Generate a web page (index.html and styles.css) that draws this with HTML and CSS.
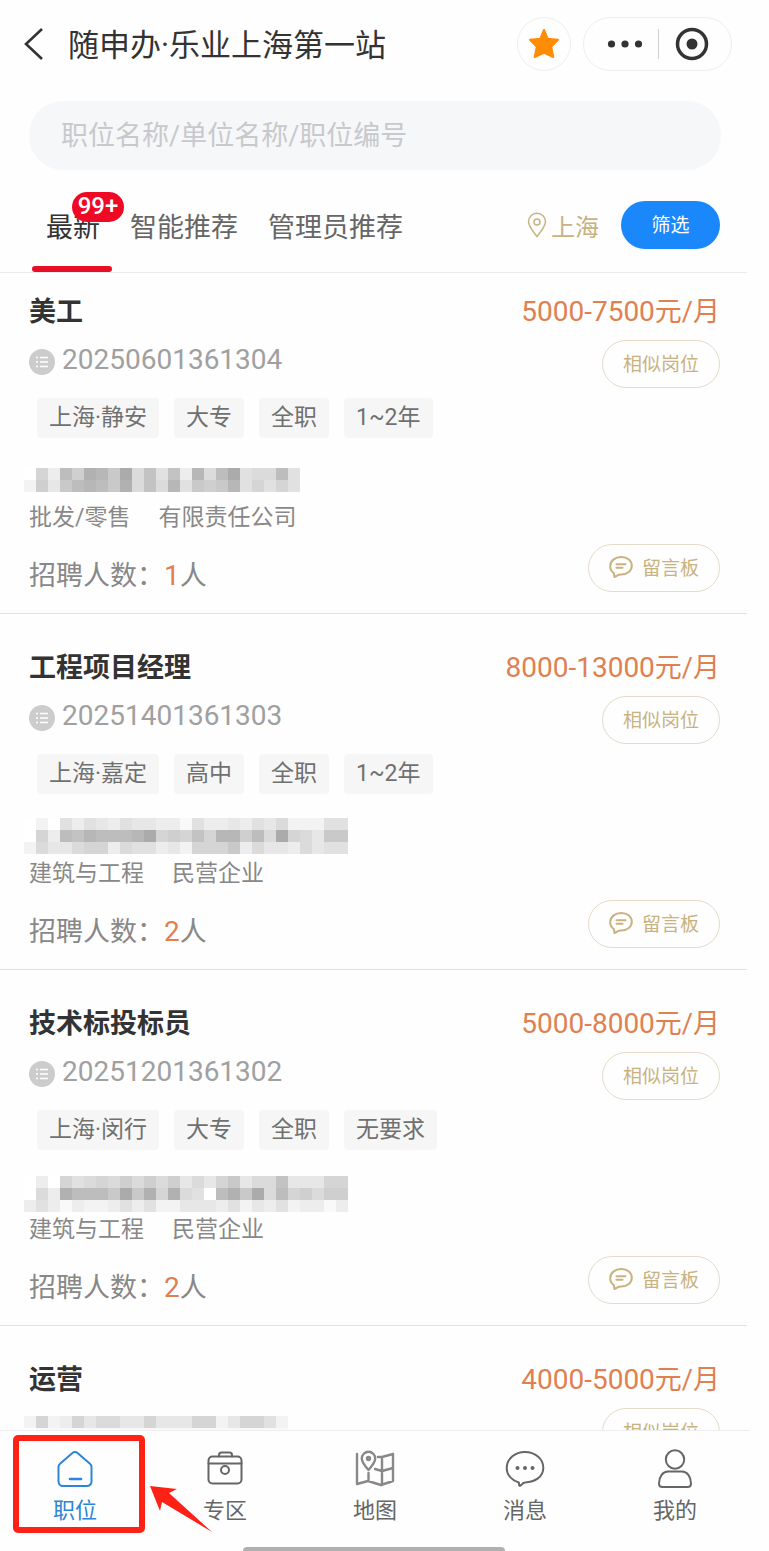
FILE: index.html
```html
<!DOCTYPE html>
<html lang="zh-CN">
<head>
    <meta charset="UTF-8">
    <meta name="viewport" content="width=device-width, initial-scale=1.0">
    <title>随申办·乐业上海第一站</title>
    <link rel="stylesheet" href="styles.css">
</head>
<body>
    <!-- 公用图标 -->
    <svg class="sprite" aria-hidden="true">
        <symbol id="icon-list" viewBox="0 0 26 26">
            <circle cx="13" cy="13" r="13" fill="#cccccc"/>
            <path d="M7 8.500h2M11 8.500h8M7 13h2M11 13h8M7 17.500h2M11 17.500h8" stroke="#ffffff" stroke-width="1.600" fill="none"/>
        </symbol>
        <symbol id="icon-board" viewBox="0 0 24 24">
            <path d="M4.800 18C2.300 16.300 1.200 14 1.200 11.300 1.200 5.900 6 2 12.300 2S22.800 5.900 22.800 10.800 18.500 19.500 12 19.500c-1.500 0-2.400.2-3.400.9L5.500 22z" fill="none" stroke="currentColor" stroke-width="2" stroke-linejoin="round"/>
            <path d="M7.500 9.200h9M7.500 12.800h6" stroke="currentColor" stroke-width="2" stroke-linecap="round"/>
        </symbol>
    </svg>

    <div class="app">
        <header class="navbar">
            <button type="button" class="back-btn" aria-label="返回">
                <svg width="22" height="34" viewBox="0 0 22 34" fill="none" stroke="#333333" stroke-width="2.600"><path d="M20 2L4 17l16 15"/></svg>
            </button>
            <h1 class="nav-title">随申办·乐业上海第一站</h1>
            <button type="button" class="star-btn" aria-label="收藏">
                <svg width="32" height="32" viewBox="0 0 32 32"><path d="M16 2l3.800 8.800 10.200 1-6.800 7 2.100 10.200L16 24.800 6.700 29l2.100-10.200-6.800-7 10.200-1z" fill="#ff8c05" stroke="#ff8c05" stroke-width="2" stroke-linejoin="round"/></svg>
            </button>
            <div class="capsule">
                <button type="button" aria-label="更多">
                    <svg width="36" height="8" viewBox="0 0 36 8" fill="#333333"><circle cx="4.500" cy="4" r="3.600"/><circle cx="18" cy="4" r="3.600"/><circle cx="31.500" cy="4" r="3.600"/></svg>
                </button>
                <button type="button" aria-label="关闭">
                    <svg width="34" height="34" viewBox="0 0 34 34"><circle cx="17" cy="17" r="14.500" fill="none" stroke="#333333" stroke-width="3.500"/><circle cx="17" cy="17" r="5.500" fill="#333333"/></svg>
                </button>
            </div>
        </header>

        <input type="search" class="search" placeholder="职位名称/单位名称/职位编号" aria-label="搜索职位">

        <div class="filter-bar">
            <nav class="tabs">
                <a href="#new" class="tab active">最新<span class="badge">99+</span></a>
                <a href="#smart" class="tab">智能推荐</a>
                <a href="#admin" class="tab">管理员推荐</a>
            </nav>
            <button type="button" class="location">
                <svg width="20" height="26" viewBox="0 0 20 26" fill="none" stroke="currentColor" stroke-width="1.500"><path d="M10 24.500C5 18.500 1.500 14 1.500 9.800a8.500 8.500 0 0 1 17 0c0 4.200-3.500 8.700-8.500 14.700z"/><circle cx="10" cy="10" r="3"/></svg>
                上海
            </button>
            <button type="button" class="filter-btn">筛选</button>
        </div>

        <main class="job-list">
            <article class="job">
                <div class="job-head">
                    <h2>美工</h2>
                    <span class="salary"><b>5000-7500</b>元/月</span>
                </div>
                <div class="job-row">
                    <span class="job-id"><svg class="list-icon"><use href="#icon-list"/></svg>20250601361304</span>
                    <button type="button" class="pill">相似岗位</button>
                </div>
                <ul class="tags"><li>上海·静安</li><li>大专</li><li>全职</li><li>1~2年</li></ul>
                <svg class="mosaic" data-top="8" data-rows="073b8dc9e6a5a3c6be566b5 2849bcb9d6a6c5989c57575"></svg>
                <p class="company-type"><span>批发/零售</span><span>有限责任公司</span></p>
                <div class="job-foot">
                    <p>招聘人数：<b>1</b>人</p>
                    <button type="button" class="pill"><svg class="board-icon"><use href="#icon-board"/></svg>留言板</button>
                </div>
            </article>

            <article class="job">
                <div class="job-head">
                    <h2>工程项目经理</h2>
                    <span class="salary"><b>8000-13000</b>元/月</span>
                </div>
                <div class="job-row">
                    <span class="job-id"><svg class="list-icon"><use href="#icon-list"/></svg>20251401361303</span>
                    <button type="button" class="pill">相似岗位</button>
                </div>
                <ul class="tags"><li>上海·嘉定</li><li>高中</li><li>全职</li><li>1~2年</li></ul>
                <svg class="mosaic" data-top="2" data-rows="020535435443315334354622255 073bacbbbce787a7cc8b6e76499 264467736553427779364436455"></svg>
                <p class="company-type"><span>建筑与工程</span><span>民营企业</span></p>
                <div class="job-foot">
                    <p>招聘人数：<b>2</b>人</p>
                    <button type="button" class="pill"><svg class="board-icon"><use href="#icon-board"/></svg>留言板</button>
                </div>
            </article>

            <article class="job">
                <div class="job-head">
                    <h2>技术标投标员</h2>
                    <span class="salary"><b>5000-8000</b>元/月</span>
                </div>
                <div class="job-row">
                    <span class="job-id"><svg class="list-icon"><use href="#icon-list"/></svg>20251201361302</span>
                    <button type="button" class="pill">相似岗位</button>
                </div>
                <ul class="tags"><li>上海·闵行</li><li>大专</li><li>全职</li><li>无要求</li></ul>
                <svg class="mosaic" data-top="4" data-rows="030756768686846479466a44477 063dbbb9e9d7d650bd9e6b78688 353132235352244435243523313"></svg>
                <p class="company-type"><span>建筑与工程</span><span>民营企业</span></p>
                <div class="job-foot">
                    <p>招聘人数：<b>2</b>人</p>
                    <button type="button" class="pill"><svg class="board-icon"><use href="#icon-board"/></svg>留言板</button>
                </div>
            </article>

            <article class="job">
                <div class="job-head">
                    <h2>运营</h2>
                    <span class="salary"><b>4000-5000</b>元/月</span>
                </div>
                <div class="job-row">
                    <svg class="mosaic" data-top="8" data-rows="2723746644744477247752 0111111111111111111111"></svg>
                    <button type="button" class="pill">相似岗位</button>
                </div>
            </article>
        </main>

        <nav class="tabbar">
            <a href="#jobs" class="active">
                <svg width="40" height="40" viewBox="0 0 40 40"><path d="M17.200 4.200L5.300 14.400C4 15.500 3.500 16.500 3.500 18v14.500a4.500 4.500 0 0 0 4.500 4.500h24a4.500 4.500 0 0 0 4.500-4.500V18c0-1.500-.5-2.500-1.800-3.600L22.800 4.200c-1.800-1.500-3.800-1.500-5.600 0z"/><path d="M15 30h11" stroke-width="2.600"/></svg>
                <span>职位</span>
            </a>
            <a href="#zone">
                <svg width="40" height="40" viewBox="0 0 40 40"><rect x="3.500" y="7.500" width="33" height="27" rx="4"/><path d="M3.500 14.500h33M14 7.500V6a2.500 2.500 0 0 1 2.500-2.500h8A2.500 2.500 0 0 1 27 6v1.500"/><circle cx="20" cy="21" r="4"/></svg>
                <span>专区</span>
            </a>
            <a href="#map">
                <svg class="map-icon" width="40" height="40" viewBox="0 0 40 40"><path d="M2 5v30l11-3 13 4 12-4V5l-11 3h-4M27 8v28M13.500 24v8M20 20l7 2 11-3"/><path d="M13.500 21C9.500 16.500 6.800 13 6.800 9.500a6.700 6.700 0 0 1 13.400 0c0 3.500-2.700 7-6.700 11.500z"/><circle cx="13.500" cy="9.500" r="1.500"/></svg>
                <span>地图</span>
            </a>
            <a href="#message">
                <svg width="40" height="40" viewBox="0 0 40 40"><path d="M13.800 33.500C6.500 31.300 1.700 25.800 1.700 19 1.700 9.900 9.900 3 20 3s18.300 6.900 18.300 15.700c0 9.300-8.300 14.300-18.300 14.700-1.500 0-2.200.8-3.200 2-1.200 1.500-2.700 2.100-2.600.6z"/><g class="dots"><circle cx="12.500" cy="19" r="2"/><circle cx="20" cy="19" r="2"/><circle cx="27.500" cy="19" r="2"/></g></svg>
                <span>消息</span>
            </a>
            <a href="#mine">
                <svg width="40" height="40" viewBox="0 0 40 40"><circle cx="20" cy="10.500" r="9.200"/><path d="M13 22.500h14c5 0 9 5 9 12 0 2.500-1.300 3.500-3.500 3.500h-25C5.300 38 4 37 4 34.500c0-7 4-12 9-12z"/></svg>
                <span>我的</span>
            </a>
            <!-- 操作指引标注 -->
            <div class="guide-box"></div>
            <svg class="guide-arrow" width="62" height="46" viewBox="0 0 62 46"><path d="M0 0l27 3-8 4 43 39-50-30-2 9z" fill="#fe2216"/></svg>
            <div class="home-indicator"></div>
        </nav>
    </div>

    <script>
        // 单位名称打码：每个十六进制字符对应一个灰度方块
        document.querySelectorAll('.mosaic').forEach((svg) => {
            const size = 12;
            const top = Number(svg.dataset.top);
            svg.dataset.rows.split(' ').forEach((row, y) => {
                [...row].forEach((level, x) => {
                    const gray = 255 - parseInt(level, 16) * 6;
                    const rect = document.createElementNS('http://www.w3.org/2000/svg', 'rect');
                    rect.setAttribute('x', x * size);
                    rect.setAttribute('y', top + y * size);
                    rect.setAttribute('width', size);
                    rect.setAttribute('height', size);
                    rect.setAttribute('fill', `rgb(${gray},${gray},${gray})`);
                    svg.appendChild(rect);
                });
            });
        });
    </script>
</body>
</html>
```
FILE: styles.css
```css
* {
    box-sizing: border-box;
}
body {
    margin: 0;
    padding-right: 22px;
    background: #fefefe;
    color: #333333;
    font-family: Roboto, "Noto Sans CJK SC", sans-serif;
}
h1, h2, p, ul {
    margin: 0;
    padding: 0;
}
button {
    padding: 0;
    border: none;
    background: none;
    color: inherit;
    font-family: inherit;
    cursor: pointer;
}
a {
    color: inherit;
    text-decoration: none;
}
svg {
    flex-shrink: 0;
}
.sprite {
    display: none;
}
.app {
    display: flex;
    flex-direction: column;
    height: 100vh;
}

/* 顶部导航 */
.navbar {
    display: flex;
    align-items: center;
    padding: 17px 15px 0 22px;
}
.back-btn {
    display: flex;
}
.nav-title {
    flex: 1;
    margin-left: 24px;
    padding-top: 4px;
    font-size: 31px;
    font-weight: 400;
    line-height: 50px;
    white-space: nowrap;
}
.star-btn {
    display: flex;
    align-items: center;
    justify-content: center;
    width: 54px;
    height: 54px;
    border: 1px solid #eeeeee;
    border-radius: 50%;
}
.capsule {
    display: flex;
    align-items: center;
    width: 149px;
    height: 54px;
    margin-left: 12px;
    padding-right: 6px;
    border: 1px solid #eeeeee;
    border-radius: 27px;
}
.capsule button {
    display: flex;
    flex: 1;
    align-items: center;
    justify-content: center;
    height: 30px;
}
.capsule button:first-child {
    padding-left: 8px;
    border-right: 1px solid #d0d0d0;
}

.search {
    height: 69px;
    margin: 30px 26px 0 29px;
    padding: 0 32px;
    border: none;
    border-radius: 34px;
    background: #f6f7f9;
    font-family: inherit;
    font-size: 27px;
    outline: none;
}
.search::placeholder {
    color: #c8c9cc;
}

/* 分类与筛选 */
.filter-bar {
    display: flex;
    align-items: center;
    padding: 0 27px 0 31px;
    border-bottom: 1px solid #ebebeb;
}
.tabs {
    display: flex;
    flex: 1;
}
.tab {
    position: relative;
    height: 102px;
    padding: 0 15px;
    color: #666666;
    font-size: 27px;
    line-height: 116px;
    white-space: nowrap;
}
.tab.active {
    color: #333333;
}
.tab.active::after {
    content: "";
    position: absolute;
    bottom: 0;
    left: 1px;
    width: 80px;
    height: 6px;
    border-radius: 3px;
    background: #e60f26;
}
.badge {
    position: absolute;
    top: 22px;
    left: 41px;
    width: 52px;
    height: 30px;
    border-radius: 15px;
    background: #ee0a24;
    color: #ffffff;
    font-size: 24px;
    font-weight: 500;
    line-height: 28px;
    text-align: center;
}
.location {
    display: flex;
    align-items: center;
    gap: 4px;
    margin-top: 8px;
    color: #c8b27f;
    font-size: 24px;
}
.filter-btn {
    width: 99px;
    height: 48px;
    margin: 8px 0 0 22px;
    padding-bottom: 3px;
    border-radius: 24px;
    background: #1a88fa;
    color: #ffffff;
    font-size: 19px;
}

/* 职位列表 */
.job-list {
    flex: 1;
    min-height: 0;
    overflow-y: auto;
    scrollbar-width: none;
}
.job {
    padding: 37px 27px 21px 29px;
    border-bottom: 1px solid #e2e2e2;
}
.job:first-child {
    padding-top: 22px;
}
.job-head {
    display: flex;
    justify-content: space-between;
    font-size: 27px;
    line-height: 34px;
}
.job-head h2 {
    font-size: 27px;
    font-weight: 700;
}
.salary {
    color: #e08050;
}
.salary b {
    font-size: 28px;
    font-weight: 400;
}
.job-row {
    display: flex;
    align-items: flex-start;
    justify-content: space-between;
    margin-top: 11px;
}
.job-id {
    display: flex;
    align-items: center;
    gap: 7px;
    color: #a0a0a0;
    font-size: 28px;
    line-height: 40px;
}
.list-icon {
    width: 26px;
    height: 26px;
    margin-top: 3px;
}
.pill {
    display: flex;
    align-items: center;
    height: 48px;
    padding: 0 20px 4px;
    border: 1px solid #e4dcc8;
    border-radius: 24px;
    color: #c8b27f;
    font-size: 19px;
    white-space: nowrap;
}
.board-icon {
    width: 24px;
    height: 24px;
    margin: 2px 9px 0 0;
}
.tags {
    display: flex;
    gap: 15px;
    margin: 10px 0 0 8px;
    list-style: none;
}
.tags li {
    padding: 0 12px;
    border-radius: 4px;
    background: #f6f6f6;
    color: #707070;
    font-size: 23px;
    line-height: 40px;
}
.mosaic {
    display: block;
    width: 324px;
    height: 41px;
    margin: 22px 0 0 -5px;
}
.job-row .mosaic {
    margin-top: 0;
}
.company-type {
    display: flex;
    gap: 28px;
    color: #888888;
    font-size: 23px;
    line-height: 34px;
}
.job-foot {
    display: flex;
    align-items: flex-end;
    justify-content: space-between;
    margin-top: 9px;
    color: #888888;
    font-size: 27px;
    line-height: 32px;
}
.job-foot b {
    color: #e08050;
    font-size: 28px;
    font-weight: 400;
}

/* 底部菜单 */
.tabbar {
    position: relative;
    display: flex;
    height: 121px;
    margin-right: -3px;
    border-top: 1px solid #eeeeee;
}
.tabbar a {
    display: flex;
    flex: 1;
    flex-direction: column;
    align-items: center;
    gap: 5px;
    padding-top: 18px;
    color: #666666;
    font-size: 22px;
    line-height: 34px;
}
.tabbar a.active {
    color: #2b85d8;
}
.tabbar a svg {
    fill: none;
    stroke: currentColor;
    stroke-width: 2;
    stroke-linecap: round;
    stroke-linejoin: round;
}
.tabbar a .map-icon {
    color: #888888;
    stroke-width: 2.4;
}
.tabbar .dots {
    fill: currentColor;
    stroke: none;
}
.guide-box {
    position: absolute;
    top: 4px;
    left: 13px;
    width: 132px;
    height: 98px;
    border: 6px solid #fe2216;
    border-radius: 5px;
}
.guide-arrow {
    position: absolute;
    top: 55px;
    left: 150px;
}
.home-indicator {
    position: absolute;
    bottom: 0;
    left: 50%;
    width: 262px;
    height: 4px;
    margin-left: -132px;
    border-radius: 4px 4px 0 0;
    background: #b0b0b0;
}
```
